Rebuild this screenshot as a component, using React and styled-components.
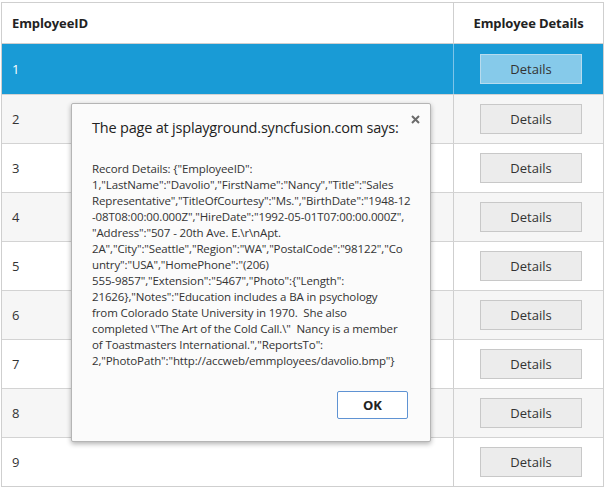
import React from 'react';
import styled, { createGlobalStyle } from 'styled-components';

const GlobalStyle = createGlobalStyle`
  html, body {
    margin: 0;
    padding: 0;
    background: #fff;
  }
  body {
    font-family: "Open Sans", "Noto Sans", sans-serif;
    color: #333;
  }
`;

const employees = [1, 2, 3, 4, 5, 6, 7, 8, 9];

// the alert text is kept with the same line breaks as the browser dialog
const recordLines = [
  'Record Details: {"EmployeeID":',
  '1,"LastName":"Davolio","FirstName":"Nancy","Title":"Sales',
  'Representative","TitleOfCourtesy":"Ms.","BirthDate":"1948-12',
  '-08T08:00:00.000Z","HireDate":"1992-05-01T07:00:00.000Z",',
  '"Address":"507 - 20th Ave. E.\\r\\nApt.',
  '2A","City":"Seattle","Region":"WA","PostalCode":"98122","Co',
  'untry":"USA","HomePhone":"(206)',
  '555-9857","Extension":"5467","Photo":{"Length":',
  '21626},"Notes":"Education includes a BA in psychology',
  'from Colorado State University in 1970.  She also',
  'completed \\"The Art of the Cold Call.\\"  Nancy is a member',
  'of Toastmasters International.","ReportsTo":',
  '2,"PhotoPath":"http://accweb/emmployees/davolio.bmp"}',
];

const Page = styled.div`
  position: relative;
  padding: 2px 1px 0 1px;
  width: 603px;
  box-sizing: border-box;
`;

const Grid = styled.div`
  border: 1px solid #cfcfcf;
  width: 603px;
  box-sizing: border-box;
`;

const HeaderRow = styled.div`
  display: grid;
  grid-template-columns: 1fr 150px;
  height: 40px;
  border-bottom: 1px solid #cfcfcf;
  background: #fff;
`;

const HeaderCell = styled.div`
  display: flex;
  align-items: center;
  justify-content: ${(p) => (p.$center ? 'center' : 'flex-start')};
  padding-left: ${(p) => (p.$center ? '0' : '10px')};
  border-left: ${(p) => (p.$center ? '1px solid #cfcfcf' : 'none')};
  font-size: 13px;
  font-weight: 700;
  letter-spacing: -0.1px;
  color: #222;
`;

const Row = styled.div`
  display: grid;
  grid-template-columns: 1fr 150px;
  height: ${(p) => (p.$selected ? '50px' : '48px')};
  border-bottom: ${(p) => (p.$last ? 'none' : '1px solid #d3d3d3')};
  background: ${(p) => (p.$selected ? '#199bd6' : p.$alt ? '#f6f6f6' : '#fff')};
  color: ${(p) => (p.$selected ? '#fff' : '#333')};
`;

const IdCell = styled.div`
  display: flex;
  align-items: center;
  padding-left: 10px;
  font-size: 13px;
`;

const ActionCell = styled.div`
  display: flex;
  align-items: center;
  justify-content: center;
  border-left: 1px solid ${(p) => (p.$selected ? '#7ec4e8' : '#cfcfcf')};
`;

const DetailsButton = styled.button`
  width: 102px;
  height: 30px;
  margin-left: 5px;
  border: 1px solid ${(p) => (p.$selected ? '#b7dbee' : '#c8c8c8')};
  background: ${(p) => (p.$selected ? '#86caea' : '#ececec')};
  color: #333;
  font-family: inherit;
  font-size: 13px;
  cursor: pointer;
`;

const Dialog = styled.div`
  position: absolute;
  left: 71px;
  top: 103px;
  width: 360px;
  height: 339px;
  box-sizing: border-box;
  padding: 14px 20px 22px 20px;
  background: #fbfbfb;
  border: 1px solid #b5b5b5;
  border-radius: 2px;
  box-shadow: 0 2px 5px rgba(0, 0, 0, 0.3);
  display: flex;
  flex-direction: column;
`;

const CloseButton = styled.span`
  position: absolute;
  top: 11px;
  right: 10px;
  width: 9px;
  height: 9px;
  display: flex;
`;

const Title = styled.div`
  font-size: 14.5px;
  line-height: 20px;
  letter-spacing: -0.2px;
  white-space: nowrap;
  color: #222;
`;

const Message = styled.div`
  margin-top: 23px;
  font-size: 11.5px;
  line-height: 16px;
  letter-spacing: -0.12px;
  color: #333;
  white-space: pre;
`;

const Footer = styled.div`
  margin-top: auto;
  display: flex;
  justify-content: flex-end;
  padding-right: 2px;
`;

const OkButton = styled.button`
  width: 71px;
  height: 28px;
  background: #fff;
  border: 1px solid #5f93d3;
  border-radius: 2px;
  font-family: inherit;
  font-size: 13px;
  font-weight: 700;
  color: #222;
`;

export default function App() {
  return (
    <Page>
      <GlobalStyle />
      <Grid>
        <HeaderRow>
          <HeaderCell>EmployeeID</HeaderCell>
          <HeaderCell $center>Employee Details</HeaderCell>
        </HeaderRow>
        {employees.map((id, i) => (
          <Row
            key={id}
            $selected={i === 0}
            $alt={i % 2 === 1}
            $last={i === employees.length - 1}
          >
            <IdCell>{id}</IdCell>
            <ActionCell $selected={i === 0}>
              <DetailsButton $selected={i === 0}>Details</DetailsButton>
            </ActionCell>
          </Row>
        ))}
      </Grid>

      <Dialog>
        <CloseButton>
          <svg width="9" height="9" viewBox="0 0 9 9">
            <path d="M1 1 L8 8 M8 1 L1 8" stroke="#6b6b6b" strokeWidth="2" />
          </svg>
        </CloseButton>
        <Title>The page at jsplayground.syncfusion.com says:</Title>
        <Message>
          {recordLines.map((line) => (
            <div key={line}>{line}</div>
          ))}
        </Message>
        <Footer>
          <OkButton>OK</OkButton>
        </Footer>
      </Dialog>
    </Page>
  );
}
